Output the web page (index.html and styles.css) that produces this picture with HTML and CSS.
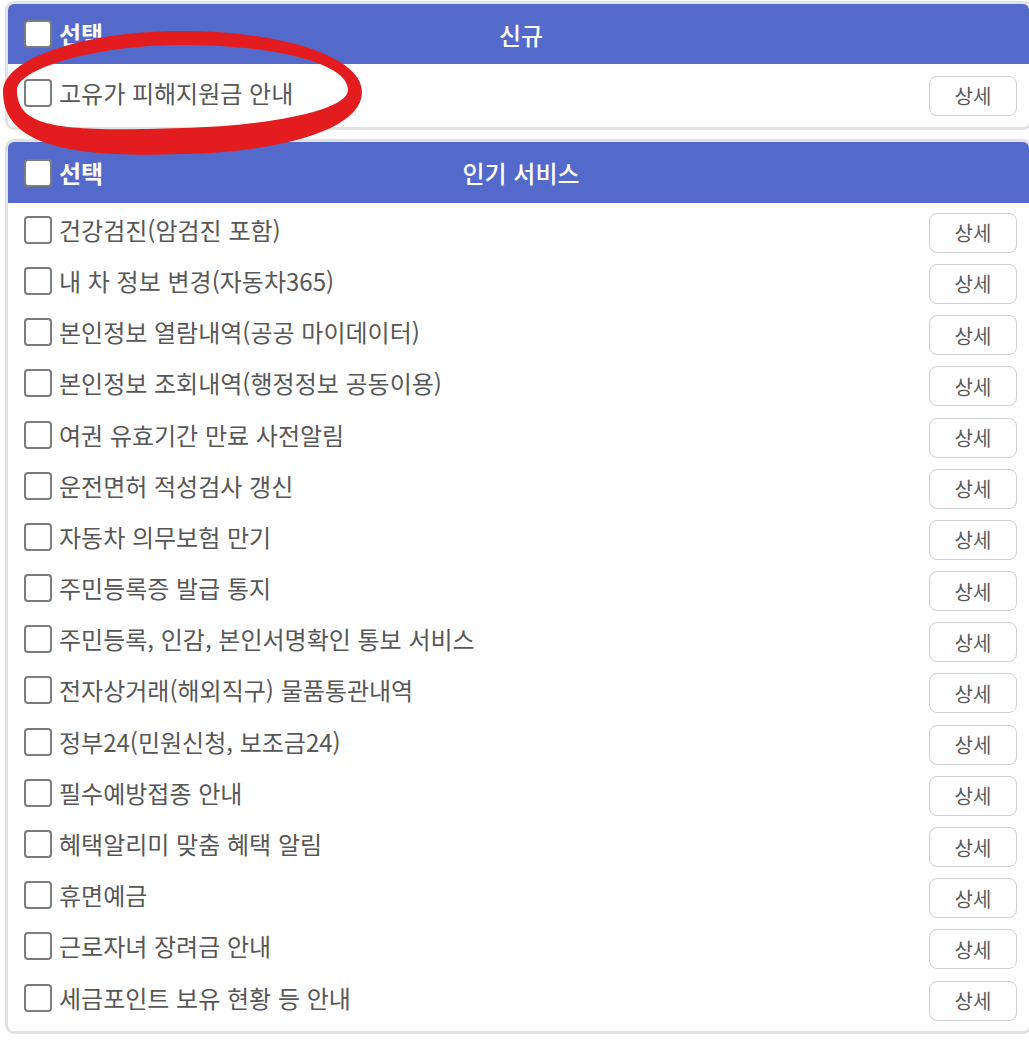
FILE: index.html
```html
<!DOCTYPE html>
<html lang="ko">

<head>
	<meta charset="UTF-8">
	<meta name="viewport" content="width=device-width, initial-scale=1.0">
	<title>서비스 선택</title>
	<link rel="stylesheet" href="styles.css">
</head>

<body>
	<div class="wrap">
		<section class="card cardNew">
			<div class="cardHead">
				<label class="pick pickHead"><input type="checkbox">선택</label>
				<h2 class="cardTitle">신규</h2>
				<span></span>
			</div>
			<ul class="list">
				<li class="item"><label class="pick"><input type="checkbox">고유가 피해지원금 안내</label><button class="btnDetail">상세</button></li>
			</ul>
		</section>

		<section class="card">
			<div class="cardHead">
				<label class="pick pickHead"><input type="checkbox">선택</label>
				<h2 class="cardTitle">인기 서비스</h2>
				<span></span>
			</div>
			<ul class="list">
				<li class="item"><label class="pick"><input type="checkbox">건강검진(암검진 포함)</label><button class="btnDetail">상세</button></li>
				<li class="item"><label class="pick"><input type="checkbox">내 차 정보 변경(자동차365)</label><button class="btnDetail">상세</button></li>
				<li class="item"><label class="pick"><input type="checkbox">본인정보 열람내역(공공 마이데이터)</label><button class="btnDetail">상세</button></li>
				<li class="item"><label class="pick"><input type="checkbox">본인정보 조회내역(행정정보 공동이용)</label><button class="btnDetail">상세</button></li>
				<li class="item"><label class="pick"><input type="checkbox">여권 유효기간 만료 사전알림</label><button class="btnDetail">상세</button></li>
				<li class="item"><label class="pick"><input type="checkbox">운전면허 적성검사 갱신</label><button class="btnDetail">상세</button></li>
				<li class="item"><label class="pick"><input type="checkbox">자동차 의무보험 만기</label><button class="btnDetail">상세</button></li>
				<li class="item"><label class="pick"><input type="checkbox">주민등록증 발급 통지</label><button class="btnDetail">상세</button></li>
				<li class="item"><label class="pick"><input type="checkbox">주민등록, 인감, 본인서명확인 통보 서비스</label><button class="btnDetail">상세</button></li>
				<li class="item"><label class="pick"><input type="checkbox">전자상거래(해외직구) 물품통관내역</label><button class="btnDetail">상세</button></li>
				<li class="item"><label class="pick"><input type="checkbox">정부24(민원신청, 보조금24)</label><button class="btnDetail">상세</button></li>
				<li class="item"><label class="pick"><input type="checkbox">필수예방접종 안내</label><button class="btnDetail">상세</button></li>
				<li class="item"><label class="pick"><input type="checkbox">혜택알리미 맞춤 혜택 알림</label><button class="btnDetail">상세</button></li>
				<li class="item"><label class="pick"><input type="checkbox">휴면예금</label><button class="btnDetail">상세</button></li>
				<li class="item"><label class="pick"><input type="checkbox">근로자녀 장려금 안내</label><button class="btnDetail">상세</button></li>
				<li class="item"><label class="pick"><input type="checkbox">세금포인트 보유 현황 등 안내</label><button class="btnDetail">상세</button></li>
			</ul>
		</section>

		<!-- red marker drawn over the first card -->
		<svg class="marker" width="380" height="170" viewBox="0 0 380 170">
			<path fill="#e31d1f" fill-rule="evenodd"
				d="M3 92 C3 57 88 31 182 31 C280 31 362 56 362 92 C362 130 280 152 182 154 C80 158 3 148 3 92 Z
				   M17 90 C17 70 90 45 183 45 C270 45 348 62 348 90 C348 110 270 126 182 128 C60 132 17 128 17 90 Z" />
		</svg>
	</div>
</body>

</html>
```

FILE: styles.css
```css
html {
	overflow: hidden;
}

body {
	margin: 0;
	background: #fff;
	font-family: "Noto Sans CJK KR", "Noto Sans", sans-serif;
	color: #575757;
}

.wrap {
	position: relative;
	padding: 1px 0 0 5px;
}

.card {
	box-sizing: border-box;
	width: 1027px;
	margin-bottom: 9px;
	border: 3px solid #e2e2e2;
	border-radius: 9px;
	overflow: hidden;
	background: #fff;
}

.cardHead {
	display: grid;
	grid-template-columns: 1fr auto 1fr;
	align-items: center;
	height: 61px;
	padding: 0 16px;
	background-color: #546acb;
	color: #fff;
}

.cardNew .cardHead {
	height: 60px;
}

.cardTitle {
	margin: 0;
	padding-left: 5px;
	font-size: 24px;
	font-weight: 500;
}

.list {
	list-style: none;
	margin: 0;
	padding: 4px 0 5px;
}

.cardNew .list {
	padding: 6px 0;
}

.item {
	display: flex;
	align-items: center;
	justify-content: space-between;
	height: 51.2px;
	padding: 0 12px 0 16px;
}

.pick {
	display: flex;
	align-items: center;
	gap: 7px;
	margin-bottom: 6px;
	font-size: 24px;
	line-height: 1;
	cursor: pointer;
}

.pickHead {
	margin-bottom: 0;
	font-weight: 700;
}

.pick input {
	appearance: none;
	box-sizing: border-box;
	width: 28px;
	height: 28px;
	margin: 0;
	border: 2px solid #7c7c7c;
	border-radius: 4px;
	background: #fff;
}

.btnDetail {
	width: 88px;
	height: 40px;
	border: 1px solid #cfcfcf;
	border-radius: 8px;
	background: #fff;
	color: #5a5a5a;
	font-family: inherit;
	font-size: 20px;
	cursor: pointer;
}

.marker {
	position: absolute;
	left: 0;
	top: 0;
	pointer-events: none;
}
```
